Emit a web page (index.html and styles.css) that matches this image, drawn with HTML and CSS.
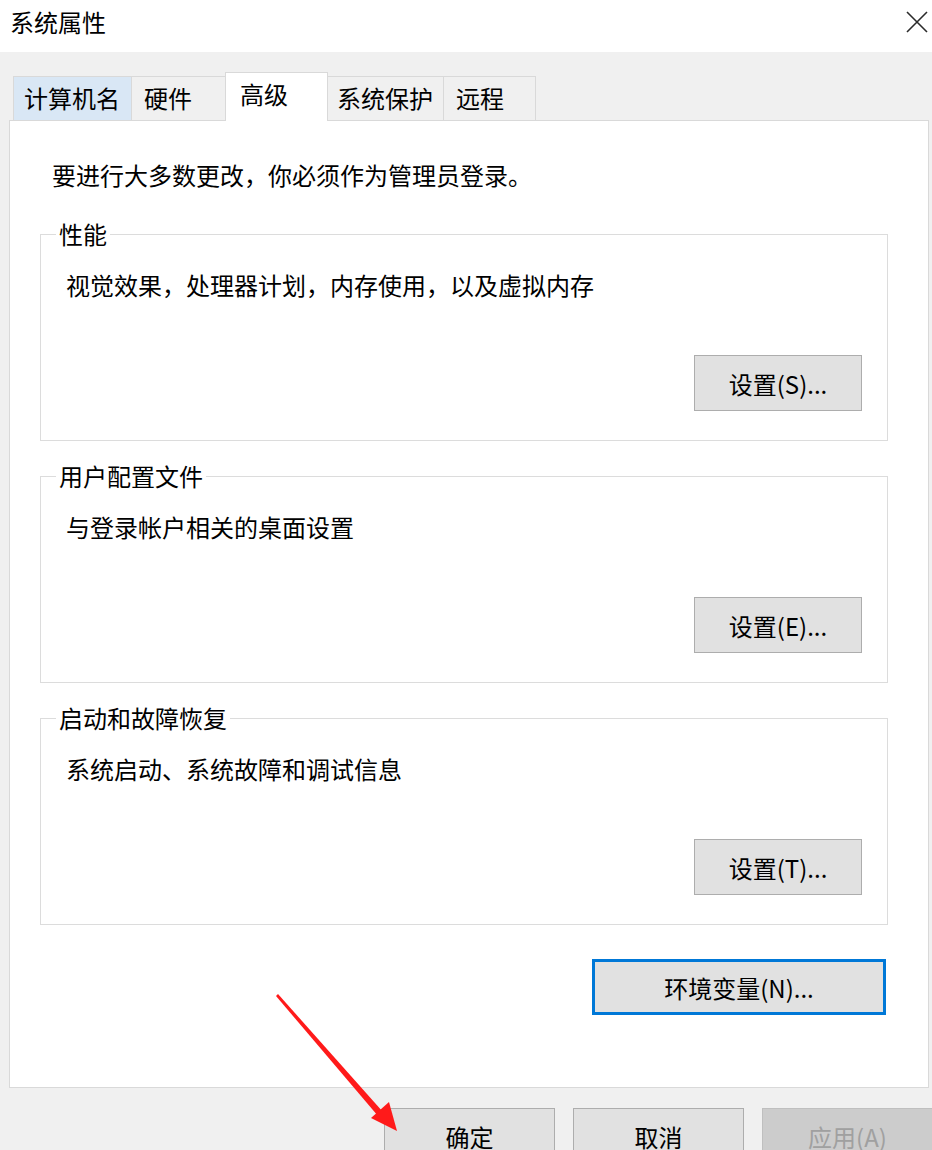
FILE: index.html
```html
<!DOCTYPE html>
<html lang="zh-CN">
<head>
<meta charset="utf-8">
<title>系统属性</title>
<link rel="stylesheet" href="styles.css">
</head>
<body>
<div class="window">
  <div class="titlebar">
    <span class="title">系统属性</span>
    <svg class="close" width="22" height="22" viewBox="0 0 22 22"><path d="M1 1 L21 21 M21 1 L1 21" stroke="#2b2b2b" stroke-width="1.6" fill="none"/></svg>
  </div>
  <div class="body">
    <div class="tabs">
      <div class="tab tab-hover tab-w1">计算机名</div>
      <div class="tab tab-w2">硬件</div>
      <div class="tab tab-active tab-w3">高级</div>
      <div class="tab tab-w4">系统保护</div>
      <div class="tab tab-w5">远程</div>
    </div>
    <div class="panel">
      <div class="intro">要进行大多数更改，你必须作为管理员登录。</div>
      <fieldset class="group first">
        <legend>性能</legend>
        <div class="desc">视觉效果，处理器计划，内存使用，以及虚拟内存</div>
        <div class="btn-row"><button class="btn">设置(S)...</button></div>
      </fieldset>
      <fieldset class="group">
        <legend>用户配置文件</legend>
        <div class="desc">与登录帐户相关的桌面设置</div>
        <div class="btn-row"><button class="btn">设置(E)...</button></div>
      </fieldset>
      <fieldset class="group">
        <legend>启动和故障恢复</legend>
        <div class="desc">系统启动、系统故障和调试信息</div>
        <div class="btn-row"><button class="btn">设置(T)...</button></div>
      </fieldset>
      <div class="env-row"><button class="btn btn-env">环境变量(N)...</button></div>
    </div>
    <div class="footer">
      <button class="btn btn-foot">确定</button>
      <button class="btn btn-foot">取消</button>
      <button class="btn btn-foot btn-disabled">应用(A)</button>
    </div>
  </div>
  <svg class="arrow" width="932" height="1150" viewBox="0 0 932 1150">
    <polygon points="276,996 278,994 383,1112 378,1116" fill="#ff1a1a"/>
    <polygon points="397,1131 371,1118 389,1102" fill="#ff1a1a"/>
  </svg>
</div>
</body>
</html>
```

FILE: styles.css
```css
html, body {
  margin: 0;
  padding: 0;
}
body {
  width: 932px;
  height: 1150px;
  overflow: hidden;
  background: #f0f0f0;
  font-family: "Noto Sans CJK SC", "Microsoft YaHei", "Liberation Sans", sans-serif;
  color: #000;
}
.window {
  position: relative;
  width: 932px;
  height: 1150px;
}
.titlebar {
  height: 52px;
  background: #fff;
  display: flex;
  justify-content: space-between;
  align-items: flex-start;
  padding: 6px 4px 0 10px;
  box-sizing: border-box;
}
.title {
  font-size: 24px;
  line-height: 32px;
}
.close {
  margin-top: 5px;
}
.body {
  padding-left: 9px;
}
.tabs {
  display: flex;
  align-items: flex-end;
  height: 48px;
  margin-top: 20px;
  padding-left: 4px;
  position: relative;
  z-index: 1;
}
.tab {
  box-sizing: border-box;
  height: 44px;
  border: 1px solid #d9d9d9;
  border-bottom: none;
  background: #f0f0f0;
  font-size: 24px;
  line-height: 42px;
  padding-left: 10px;
  margin-left: -1px;
  white-space: nowrap;
}
.tab:first-child { margin-left: 0; }
.tab-hover { background: #d9e7f5; }
.tab-active {
  height: 49px;
  margin-bottom: -1px;
  background: #fff;
  padding-left: 14px;
}
.tab-w1 { width: 119px; }
.tab-w2 { width: 95px; padding-left: 12px; }
.tab-w3 { width: 103px; }
.tab-w4 { width: 117px; padding-left: 9px; }
.tab-w5 { width: 93px; padding-left: 12px; }
.panel {
  box-sizing: border-box;
  width: 920px;
  height: 968px;
  background: #fff;
  border: 1px solid #d9d9d9;
  padding: 0 40px 0 30px;
  display: flex;
  flex-direction: column;
}
.intro {
  margin-top: 39px;
  padding-left: 12px;
  font-size: 24px;
  line-height: 30px;
}
.group {
  margin: 20px 0 0 0;
  border: 1px solid #dcdcdc;
  padding: 21px 25px 29px 25px;
  min-width: 0;
}
.group.first {
  margin-top: 29px;
}
.group legend {
  margin-left: -10px;
  padding: 0 3px;
  font-size: 24px;
  line-height: 30px;
}
.desc {
  font-size: 24px;
  line-height: 30px;
}
.btn-row {
  display: flex;
  justify-content: flex-end;
  margin-top: 55px;
}
.btn {
  box-sizing: border-box;
  width: 168px;
  height: 56px;
  background: #e1e1e1;
  border: 1px solid #adadad;
  font-family: "Noto Sans CJK SC", "Microsoft YaHei", "Liberation Sans", sans-serif;
  font-size: 24px;
  color: #000;
  padding: 0;
  margin: 0;
}
.env-row {
  display: flex;
  justify-content: flex-end;
  margin-top: 34px;
  padding-right: 2px;
}
.btn-env {
  width: 294px;
  border: 3px solid #0078d7;
}
.footer {
  display: flex;
  gap: 18px;
  padding-left: 375px;
  margin-top: 20px;
}
.btn-foot {
  width: 171px;
  flex-shrink: 0;
}
.btn-disabled {
  background: #cccccc;
  border-color: #bfbfbf;
  color: #a0a0a0;
}
.arrow {
  position: absolute;
  left: 0;
  top: 0;
  pointer-events: none;
  z-index: 5;
}
```
